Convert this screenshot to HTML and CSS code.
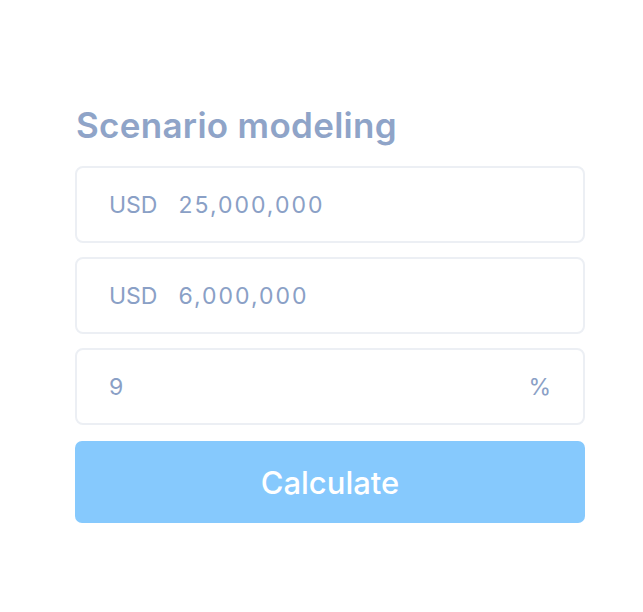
FILE: index.html
```html
<!DOCTYPE html>
<html>
<head>
<meta charset="utf-8">
<link rel="stylesheet" href="styles.css">
</head>
<body>
<div class="card">
  <h1 class="title">Scenario modeling</h1>
  <div class="field">
    <span class="prefix">USD</span><span class="value">25,000,000</span>
  </div>
  <div class="field">
    <span class="prefix">USD</span><span class="value">6,000,000</span>
  </div>
  <div class="field">
    <span class="value">9</span><span class="suffix">%</span>
  </div>
  <button class="btn">Calculate</button>
</div>
</body>
</html>
```
FILE: styles.css
```css
html, body {
  margin: 0;
  padding: 0;
  background: #ffffff;
}
body {
  width: 643px;
  height: 612px;
  overflow: hidden;
  font-family: Inter, "Open Sans", sans-serif;
}
.card {
  display: flex;
  flex-direction: column;
  gap: 14px;
  padding: 102px 58px 0 75px;
}
.title {
  margin: 0 0 4px 1px;
  font-size: 35px;
  font-weight: 600;
  line-height: 46px;
  color: #8fa4c8;
  letter-spacing: 0.3px;
}
.field {
  display: flex;
  align-items: center;
  height: 73px;
  border: 2px solid #eceff4;
  border-radius: 8px;
  padding: 0 32px;
  font-size: 23px;
  color: #8aa0c6;
}
.prefix {
  margin-right: 21px;
}
.value {
  letter-spacing: 2px;
}
.suffix {
  margin-left: auto;
  margin-right: 0;
}
.btn {
  height: 82px;
  margin-top: 2px;
  border: none;
  border-radius: 7px;
  background: #86c9fd;
  color: #ffffff;
  font-family: Inter, "Open Sans", sans-serif;
  font-size: 31px;
  font-weight: 500;
  padding: 0;
}
```
